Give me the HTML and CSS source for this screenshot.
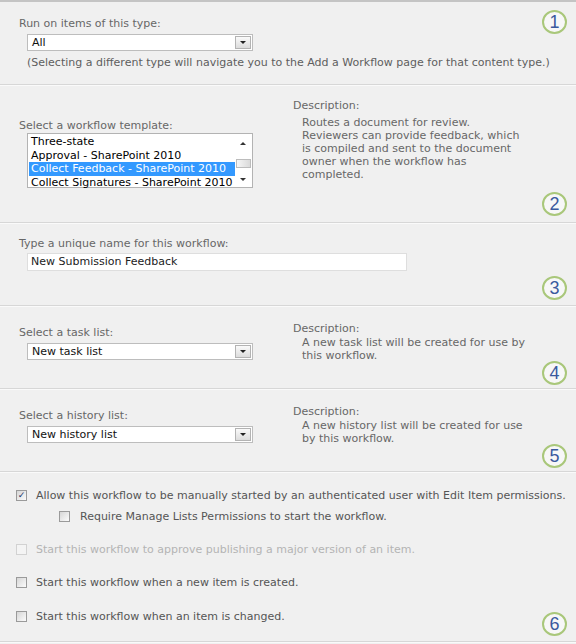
FILE: index.html
```html
<!DOCTYPE html>
<html>
<head>
<meta charset="utf-8">
<link rel="stylesheet" href="styles.css">
</head>
<body>
<div class="page">

  <section class="sec s1">
    <div class="label">Run on items of this type:</div>
    <div class="field">
      <div class="dd"><span class="dd-text">All</span><span class="dd-btn"><span class="tri"></span></span></div>
    </div>
    <div class="help">(Selecting a different type will navigate you to the Add a Workflow page for that content type.)</div>
    <span class="num num-top">1</span>
  </section>

  <section class="sec s2">
    <div class="cols">
      <div class="left left-tpl">
        <div class="label">Select a workflow template:</div>
        <div class="field">
          <div class="listbox">
            <div class="items">
              <div class="item">Three-state</div>
              <div class="item">Approval - SharePoint 2010</div>
              <div class="item sel">Collect Feedback - SharePoint 2010</div>
              <div class="item">Collect Signatures - SharePoint 2010</div>
            </div>
            <div class="sbar">
              <span class="sb-up"></span>
              <span class="sb-thumb"></span>
              <span class="sb-down"></span>
            </div>
          </div>
        </div>
      </div>
      <div class="right">
        <div class="label">Description:</div>
        <div class="desc">Routes a document for review. Reviewers can provide feedback, which is compiled and sent to the document owner when the workflow has completed.</div>
      </div>
    </div>
    <span class="num">2</span>
  </section>

  <section class="sec s3">
    <div class="label">Type a unique name for this workflow:</div>
    <div class="field">
      <div class="textbox">New Submission Feedback</div>
    </div>
    <span class="num">3</span>
  </section>

  <section class="sec s4">
    <div class="cols">
      <div class="left left-list">
        <div class="label">Select a task list:</div>
        <div class="field">
          <div class="dd"><span class="dd-text">New task list</span><span class="dd-btn"><span class="tri"></span></span></div>
        </div>
      </div>
      <div class="right">
        <div class="label">Description:</div>
        <div class="desc">A new task list will be created for use by this workflow.</div>
      </div>
    </div>
    <span class="num">4</span>
  </section>

  <section class="sec s5">
    <div class="cols">
      <div class="left left-list">
        <div class="label">Select a history list:</div>
        <div class="field">
          <div class="dd"><span class="dd-text">New history list</span><span class="dd-btn"><span class="tri"></span></span></div>
        </div>
      </div>
      <div class="right">
        <div class="label">Description:</div>
        <div class="desc">A new history list will be created for use by this workflow.</div>
      </div>
    </div>
    <span class="num">5</span>
  </section>

  <section class="sec s6">
    <div class="chk-row r1"><span class="cb checked">&#10003;</span><span class="chk-text">Allow this workflow to be manually started by an authenticated user with Edit Item permissions.</span></div>
    <div class="chk-row r2 sub"><span class="cb"></span><span class="chk-text">Require Manage Lists Permissions to start the workflow.</span></div>
    <div class="chk-row r3 disabled"><span class="cb"></span><span class="chk-text">Start this workflow to approve publishing a major version of an item.</span></div>
    <div class="chk-row r4"><span class="cb"></span><span class="chk-text">Start this workflow when a new item is created.</span></div>
    <div class="chk-row r5"><span class="cb"></span><span class="chk-text">Start this workflow when an item is changed.</span></div>
    <span class="num">6</span>
  </section>

</div>
</body>
</html>
```

FILE: styles.css
```css
html, body {
  margin: 0;
  padding: 0;
  background: #f0f0f0;
}
body {
  width: 576px;
  height: 644px;
  overflow: hidden;
  font-family: "DejaVu Sans", Verdana, sans-serif;
  font-size: 11px;
  line-height: 13px;
  color: #676767;
}
.page {
  border-top: 2px solid #c4c4c4;
}
.sec {
  position: relative;
  box-sizing: border-box;
  border-bottom: 1px solid #d7d7d7;
  box-shadow: 0 1px 0 #fafafa;
  padding-left: 19px;
}
.s1 { height: 83px; padding-top: 15px; }
.s2 { height: 138px; padding-top: 14px; }
.s3 { height: 83px; padding-top: 14px; }
.s4 { height: 83px; padding-top: 16px; }
.s5 { height: 83px; padding-top: 16px; }
.s6 { height: 170px; padding-top: 17px; padding-left: 16px; }

.label { color: #676767; }
.field { padding-left: 8px; }

.s1 .field { margin-top: 4px; }
.help { margin-top: 5px; padding-left: 8px; color: #5e5e5e; }

/* dropdown */
.dd {
  box-sizing: border-box;
  width: 226px;
  height: 17px;
  background: #fff;
  border: 1px solid #bdbdbd;
  display: flex;
  align-items: center;
  justify-content: space-between;
  color: #111;
}
.dd-text { padding-left: 4px; }
.dd-btn {
  box-sizing: border-box;
  width: 16px;
  height: 13px;
  margin-right: 1px;
  border: 1px solid #b3b3b3;
  background: linear-gradient(#fafafa, #dcdcdc);
  display: flex;
  align-items: center;
  justify-content: center;
}
.tri {
  width: 0;
  height: 0;
  border-left: 3px solid transparent;
  border-right: 3px solid transparent;
  border-top: 3px solid #222;
}

/* columns */
.cols {
  display: flex;
}
.left { width: 274px; }
.right { width: 240px; }
.left-tpl { padding-top: 20px; }
.left-list { padding-top: 4px; }
.desc {
  padding-left: 9px;
  width: 226px;
  color: #676767;
}
.s2 .desc { margin-top: 4px; }
.s4 .desc, .s5 .desc { margin-top: 1px; }

/* listbox */
.s2 .field { margin-top: 1px; }
.listbox {
  box-sizing: border-box;
  width: 226px;
  height: 55px;
  background: #fff;
  border: 1px solid #b3b3b3;
  display: flex;
  padding: 1px;
}
.items {
  flex: 1;
  padding-top: 0;
  color: #000;
}
.item {
  height: 13.5px;
  line-height: 13px;
  padding-left: 2px;
  white-space: nowrap;
  overflow: hidden;
}
.item.sel {
  background: #3399ff;
  color: #fff;
}
.sbar {
  width: 16px;
  display: flex;
  flex-direction: column;
  align-items: center;
  justify-content: space-between;
  padding: 4px 0 5px;
  box-sizing: border-box;
}
.sb-up {
  width: 0; height: 0;
  border-left: 3px solid transparent;
  border-right: 3px solid transparent;
  border-bottom: 3px solid #333;
  margin-top: 3px;
}
.sb-down {
  width: 0; height: 0;
  border-left: 3px solid transparent;
  border-right: 3px solid transparent;
  border-top: 3px solid #333;
}
.sb-thumb {
  box-sizing: border-box;
  width: 15px;
  height: 9px;
  border: 1px solid #bcbcbc;
  background: linear-gradient(90deg, #f6f6f6, #dadada);
  position: relative;
  top: 2px;
}

/* text box */
.s3 .field { margin-top: 3px; }
.textbox {
  box-sizing: border-box;
  width: 380px;
  height: 18px;
  background: #fff;
  border: 1px solid #dedede;
  padding: 1px 0 0 3px;
  color: #222;
}

/* select fields in lists */
.s4 .field, .s5 .field { margin-top: 4px; }

/* checkboxes */
.chk-row {
  display: flex;
  align-items: center;
  height: 13px;
  color: #555;
}
.r2 { margin-top: 8px; padding-left: 43px; }
.r3 { margin-top: 20px; }
.r4 { margin-top: 20px; }
.r5 { margin-top: 21px; }
.cb {
  box-sizing: border-box;
  width: 11px;
  height: 11px;
  border: 1px solid #9a9a9a;
  background: linear-gradient(135deg, #d6d6d6, #fbfbfb);
  margin-right: 9px;
  display: flex;
  align-items: center;
  justify-content: center;
  font-size: 9px;
  line-height: 9px;
  color: #21366b;
  font-weight: bold;
}
.r2 .cb { margin-right: 10px; }
.disabled { color: #b4b4b4; }
.disabled .cb { border-color: #d2d2d2; background: #f4f4f4; }

/* numbered badges */
.num {
  position: absolute;
  right: 9px;
  bottom: 5px;
  box-sizing: border-box;
  width: 25px;
  height: 24px;
  border: 2px solid #a9c77a;
  border-radius: 50%;
  background: #f7f7f7;
  color: #3a5a9e;
  font-family: "Liberation Sans", Arial, sans-serif;
  font-size: 18px;
  line-height: 20px;
  text-align: center;
}
.num-top { top: 8px; bottom: auto; }
.s2 .num { bottom: 6px; }
.s4 .num, .s5 .num { bottom: 3px; }
```
